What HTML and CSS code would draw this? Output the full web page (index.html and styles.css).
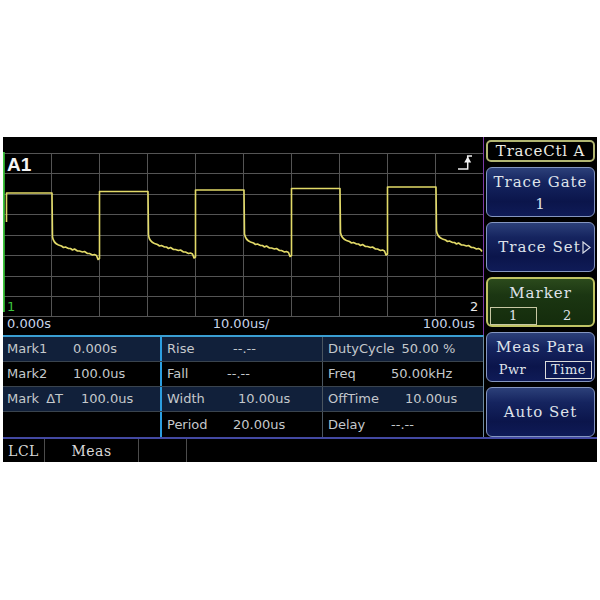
FILE: index.html
```html
<!DOCTYPE html>
<html>
<head>
<meta charset="utf-8">
<title>Trace</title>
<link rel="stylesheet" href="styles.css">
</head>
<body>
<div class="screen">
  <div class="main">
    <div class="left">
      <div class="plot">
        <svg class="graph" width="480" height="180" viewBox="0 0 480 180">
          <g stroke="#545454" stroke-width="1" fill="none">
            <path d="M0 16.5H480M0 36.5H480M0 57.5H480M0 77.5H480M0 98.5H480M0 118.5H480M0 139.5H480M0 159.5H480M0 179.5H480"/>
            <path d="M48.5 16V180M96.5 16V180M144.5 16V180M192.5 16V180M240.5 16V180M288.5 16V180M336.5 16V180M384.5 16V180M432.5 16V180"/>
          </g>
          <path d="M0.9 15V175" stroke="#3cc43c" stroke-width="1.8"/>
          <path fill="none" stroke="#e2da68" stroke-width="1.6" stroke-linejoin="round"
            d="M3.5 85V56H49
               l.5 44 q1 6 6 8 l3 1 2 1.5 2 -.5 3 1.5 2 0 2 1.5 2 -1 3 2 2 0 3 1 2 -.5 3 2 2 0 3 1.5 2 -.5 2 1 1.5 4 1.5 -1 v-67 h48.5
               l.5 44 q1 6 6 8 l3 1 2 1.5 2 -.5 3 1.5 2 0 2 1.5 2 -1 3 2 2 0 3 1 2 -.5 3 2 2 0 3 1.5 2 -.5 2 1 1.5 4 1.5 -1 v-67 h48.5
               l.5 44 q1 6 6 8 l3 1 2 1.5 2 -.5 3 1.5 2 0 2 1.5 2 -1 3 2 2 0 3 1 2 -.5 3 2 2 0 3 1.5 2 -.5 2 1 1.5 4 1.5 -1 v-67 h48.5
               l.5 44 q1 6 6 8 l3 1 2 1.5 2 -.5 3 1.5 2 0 2 1.5 2 -1 3 2 2 0 3 1 2 -.5 3 2 2 0 3 1.5 2 -.5 2 1 1.5 4 1.5 -1 v-67 h48.5
               l.5 44 q1 6 6 8 l3 1 2 1.5 2 -.5 3 1.5 2 0 2 1.5 2 -1 3 2 2 0 3 1 2 -.5 3 2 2 0 3 1.5 2 -.5 2 1 1.5 2"/>
          <g class="trig">
            <path d="M455 32H464.7V19H469" fill="none" stroke="#f0f0f0" stroke-width="1.5"/>
            <path d="M464.7 19.5L461.2 25.5H468.2Z" fill="#f0f0f0"/>
          </g>
        </svg>
        <span class="a1">A1</span>
        <span class="ch ch1">1</span>
        <span class="ch ch2">2</span>
      </div>
      <div class="axis">
        <span>0.000s</span>
        <span>10.00us/</span>
        <span class="r">100.0us</span>
      </div>
      <div class="table">
        <div class="row alt">
          <div class="cell c1"><span class="lab">Mark1</span><span>0.000s</span></div>
          <div class="cell c2"><span class="lab">Rise</span><span>--.--</span></div>
          <div class="cell c3"><span class="lab gap">DutyCycle</span><span>50.00 %</span></div>
        </div>
        <div class="row">
          <div class="cell c1"><span class="lab">Mark2</span><span>100.0us</span></div>
          <div class="cell c2"><span class="lab short">Fall</span><span>--.--</span></div>
          <div class="cell c3"><span class="lab">Freq</span><span>50.00kHz</span></div>
        </div>
        <div class="row alt">
          <div class="cell c1"><span class="lab wide">Mark ΔT</span><span>100.0us</span></div>
          <div class="cell c2"><span class="lab long">Width</span><span>10.00us</span></div>
          <div class="cell c3"><span class="lab long">OffTime</span><span>10.00us</span></div>
        </div>
        <div class="row last">
          <div class="cell c1"></div>
          <div class="cell c2"><span class="lab">Period</span><span>20.00us</span></div>
          <div class="cell c3"><span class="lab">Delay</span><span>--.--</span></div>
        </div>
      </div>
    </div>
    <div class="menu">
      <div class="btn head">TraceCtl A</div>
      <div class="btn navy two">
        <span class="line">Trace Gate</span>
        <span class="line">1</span>
      </div>
      <div class="btn navy one shift">
        <span class="line">Trace Set<svg class="tri" width="9" height="13" viewBox="0 0 9 13"><path d="M1 1V12L8 6.5Z" fill="none" stroke="#d8dce6" stroke-width="1.2"/></svg></span>
      </div>
      <div class="btn green two">
        <span class="line">Marker</span>
        <div class="sub">
          <span class="opt sel olive">1</span>
          <span class="opt">2</span>
        </div>
      </div>
      <div class="btn navy two">
        <span class="line">Meas Para</span>
        <div class="sub">
          <span class="opt">Pwr</span>
          <span class="opt sel">Time</span>
        </div>
      </div>
      <div class="btn navy one">
        <span class="line">Auto Set</span>
      </div>
    </div>
  </div>
  <div class="status">
    <div class="sc w1">LCL</div>
    <div class="sc w2">Meas</div>
    <div class="sc w3"></div>
    <div class="sc rest"></div>
  </div>
</div>
</body>
</html>
```

FILE: styles.css
```css
* {
  box-sizing: border-box;
  margin: 0;
  padding: 0;
}

html, body {
  background: #ffffff;
}

body {
  padding: 137px 3px 0 3px;
  font-family: "DejaVu Sans", sans-serif;
}

.screen {
  width: 594px;
  height: 325px;
  background: #000000;
  display: flex;
  flex-direction: column;
}

.main {
  display: flex;
  height: 300px;
}

.left {
  width: 481px;
  display: flex;
  flex-direction: column;
}

/* plot */
.plot {
  position: relative;
  height: 180px;
  border-right: 1px solid #7c3aa6;
}

.graph {
  display: block;
}

.a1 {
  position: absolute;
  left: 4px;
  top: 18px;
  font: bold 19px/19px "Liberation Sans", Arial, sans-serif;
  color: #f4f4f4;
}

.ch {
  position: absolute;
  top: 163px;
  font: 13px/14px "DejaVu Sans", sans-serif;
}

.ch1 {
  left: 4px;
  color: #3cc43c;
}

.ch2 {
  left: 467px;
  color: #e8e8e8;
}

/* axis labels */
.axis {
  height: 18px;
  display: grid;
  grid-template-columns: 1fr auto 1fr;
  align-items: start;
  padding: 0 8px 0 4px;
  font: 13px/14px "DejaVu Sans", sans-serif;
  color: #c8d4ea;
  border-right: 1px solid #7c3aa6;
}

.axis .r {
  text-align: right;
}

/* measurement table */
.table {
  height: 102px;
  border-top: 2px solid #3a9ed2;
  border-right: 1px solid #6d8aa0;
  font: 13px/14px "DejaVu Sans", sans-serif;
  color: #c4c8cc;
}

.row {
  display: grid;
  grid-template-columns: 159px 161px 160px;
  height: 25px;
  border-bottom: 1px solid #3a444e;
}

.row.alt {
  background: #11203a;
}

.row.last {
  border-bottom: none;
}

.cell {
  display: flex;
  align-items: center;
  white-space: nowrap;
}

.c1 {
  padding-left: 4px;
  border-right: 2px solid #2c9ee0;
}

.c2 {
  padding-left: 5px;
  border-right: 1px solid #4a5560;
}

.c3 {
  padding-left: 5px;
}

.c1 .lab {
  min-width: 66px;
}

.c1 .lab.wide {
  min-width: 74px;
  word-spacing: 3px;
}

.c2 .lab {
  min-width: 66px;
}

.c2 .lab.short {
  min-width: 60px;
}

.c2 .lab.long {
  min-width: 71px;
}

.c3 .lab {
  min-width: 63px;
}

.c3 .lab.gap {
  margin-right: 7px;
}

.c3 .lab.long {
  min-width: 77px;
}

/* right menu */
.menu {
  width: 113px;
  display: flex;
  flex-direction: column;
  gap: 5px;
  padding: 3px 2px 0 2px;
}

.btn {
  height: 50px;
  border-radius: 6px;
  display: flex;
  flex-direction: column;
  align-items: center;
  color: #dfe3ea;
  font: 15px/22px "DejaVu Serif", "Liberation Serif", serif;
  letter-spacing: 1px;
  white-space: nowrap;
}

.btn.head {
  height: 22px;
  justify-content: center;
  background: #000000;
  border: 2px solid #b2b672;
  border-radius: 5px;
  color: #ecece4;
  letter-spacing: 0.8px;
}

.btn.navy {
  border: 1.5px solid #8596c0;
  background: linear-gradient(180deg, #2c4079 0%, #15245f 30%, #0b154b 70%, #0f1b57 100%);
}

.btn.green {
  border: 2px solid #c0c464;
  background: linear-gradient(180deg, #2b4a1c 0%, #1b3612 35%, #142c0c 100%);
}

.btn.one {
  justify-content: center;
}

.btn.two {
  padding-top: 3px;
}

.btn.shift {
  padding-left: 8px;
}

.line {
  display: flex;
  align-items: center;
}

.tri {
  margin-left: 1px;
}

.sub {
  width: 100%;
  display: grid;
  grid-template-columns: 1fr 1fr;
  padding: 0 2px;
  margin-top: 3px;
}

.opt {
  width: 47px;
  height: 18px;
  border: 1.5px solid transparent;
  text-align: center;
  font: 13px/15px "DejaVu Serif", "Liberation Serif", serif;
  letter-spacing: 0.5px;
}

.opt:first-child {
  justify-self: start;
}

.opt:last-child {
  justify-self: end;
}

.opt.sel {
  border-color: #dcdcdc;
}

.opt.sel.olive {
  border-color: #c8c8a4;
}

/* status bar */
.status {
  height: 25px;
  border-top: 2px solid #4349a2;
  display: flex;
  font: 14px/18px "DejaVu Serif", "Liberation Serif", serif;
  letter-spacing: 0.5px;
  color: #d8d8d8;
}

.sc {
  display: flex;
  align-items: center;
  justify-content: center;
  border-right: 1px solid #4c4c4c;
}

.w1 {
  width: 42px;
}

.w2 {
  width: 94px;
}

.w3 {
  width: 48px;
}

.rest {
  flex: 1;
  border-right: none;
}
```
